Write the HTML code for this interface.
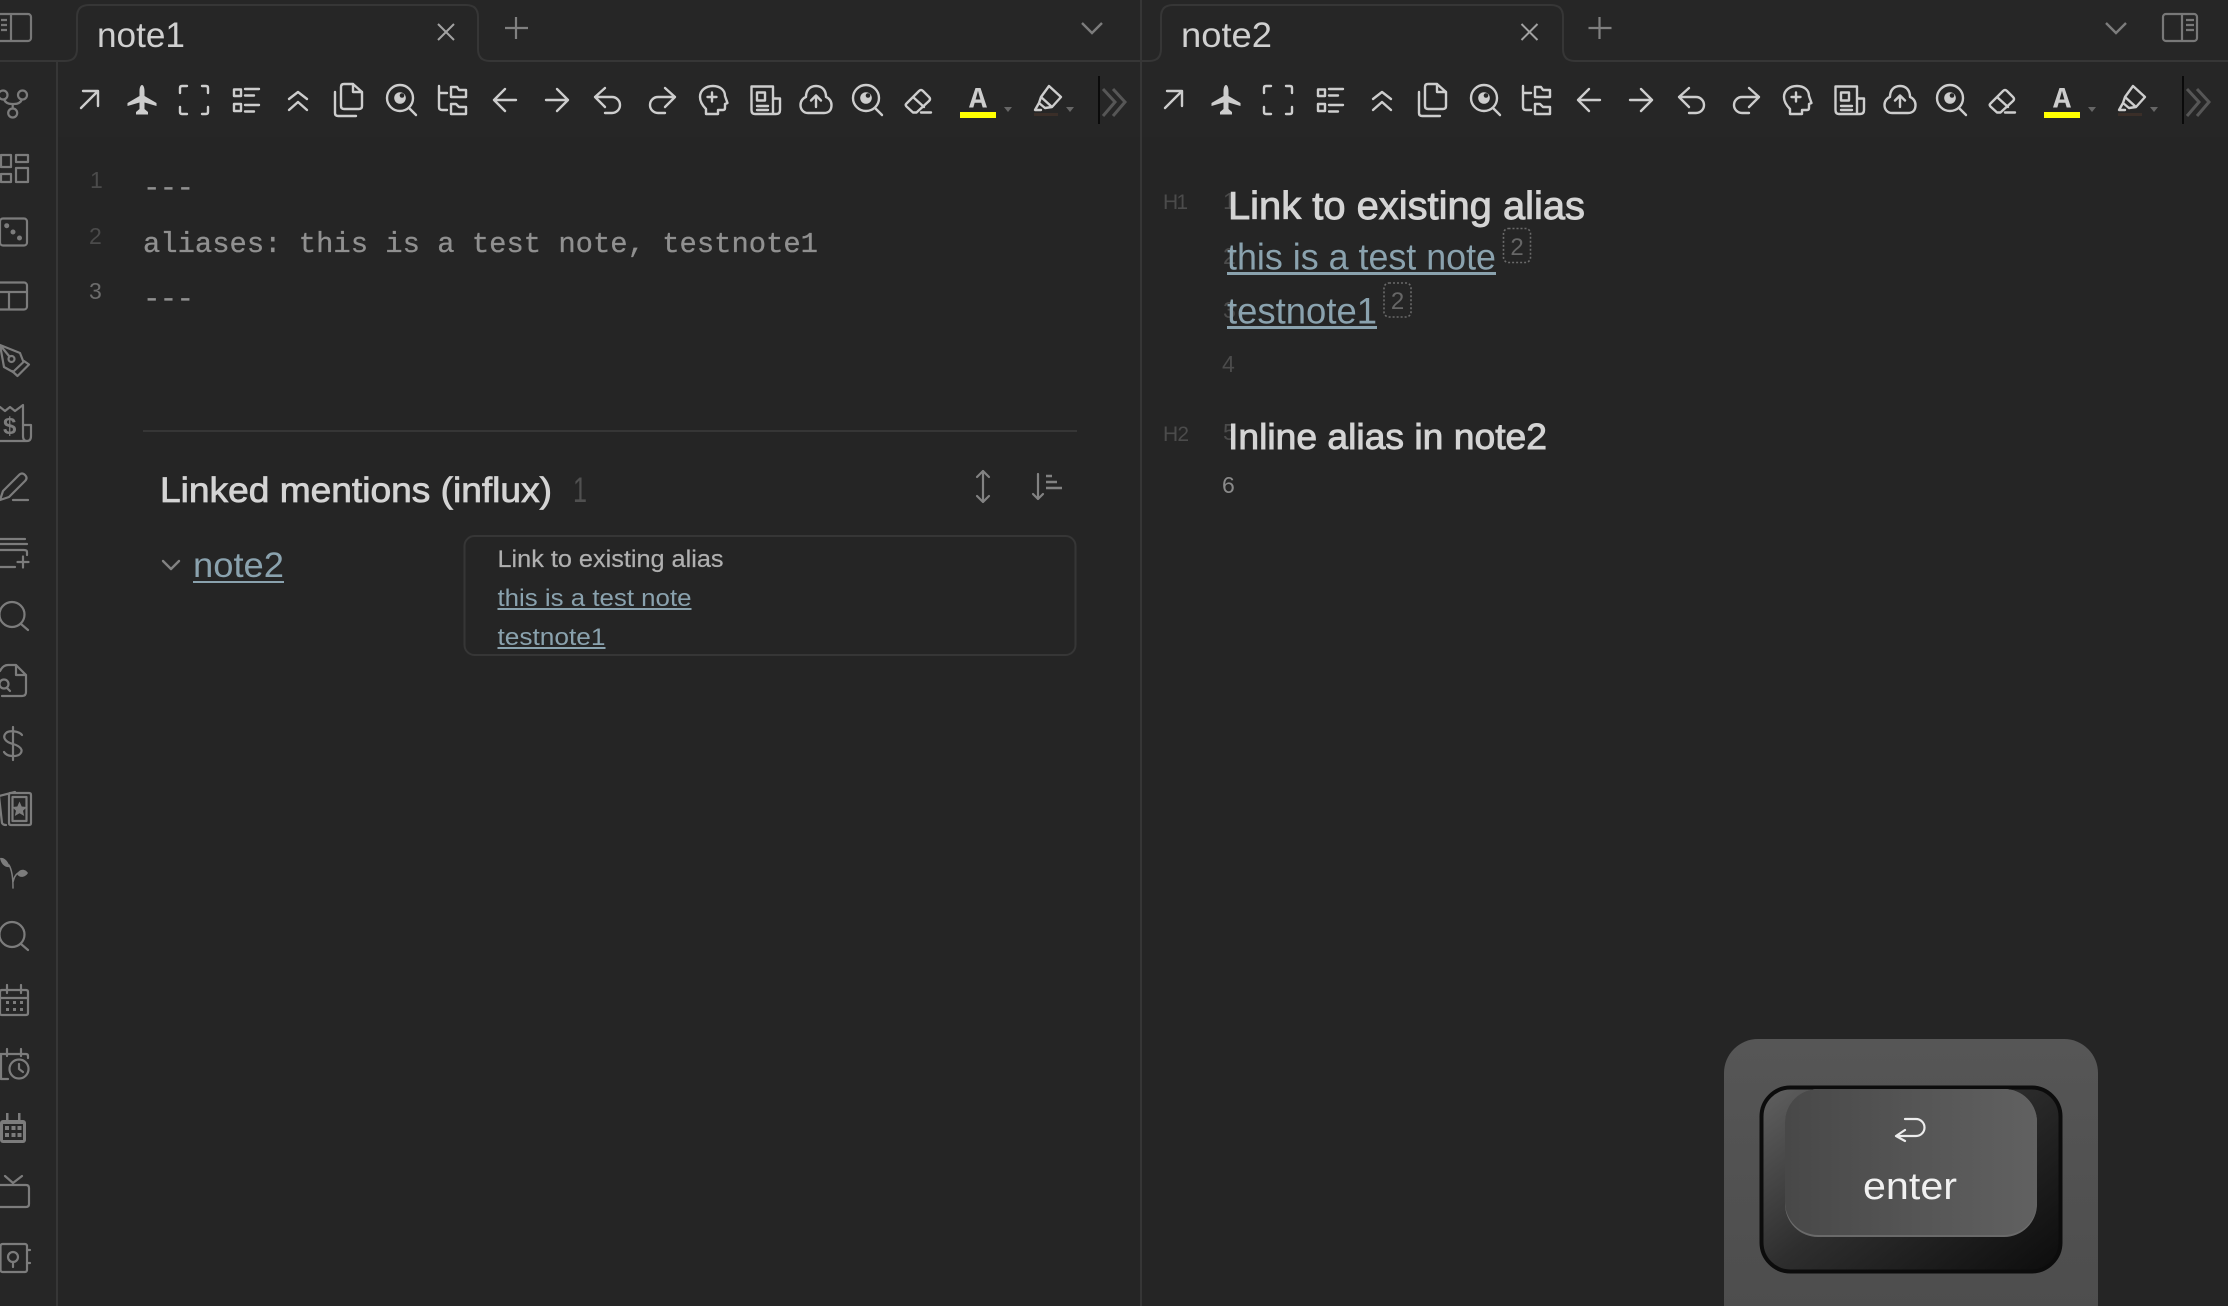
<!DOCTYPE html>
<html><head><meta charset="utf-8"><title>note1 / note2</title>
<style>
html,body{margin:0;padding:0;background:#262626;width:2228px;height:1306px;overflow:hidden}
svg{display:block;position:absolute;left:0;top:0}
text{font-family:"Liberation Sans",sans-serif}
.m{font-family:"Liberation Mono",monospace}
.t{fill:none;stroke:#cdcdcd;stroke-width:2.4;stroke-linecap:round;stroke-linejoin:round}
.f{fill:#cdcdcd}
.s{fill:none;stroke:#7c7c7c;stroke-width:2.2;stroke-linecap:round;stroke-linejoin:round}
.sf{fill:#7c7c7c}
.n{fill:#4b4b4b;font-size:23px}
.lk{fill:#8aa2ae}
.ul{fill:#8aa2ae}
</style></head><body>
<svg width="2228" height="1306" viewBox="0 0 2228 1306" xmlns="http://www.w3.org/2000/svg">
<defs>
<linearGradient id="cap" x1="0" x2="1" y1="0" y2="0"><stop offset="0" stop-color="#484848"/><stop offset="1" stop-color="#616161"/></linearGradient>
<linearGradient id="well" x1="0" x2="1" y1="0.1" y2="0.9"><stop offset="0" stop-color="#5c5c5c"/><stop offset=".45" stop-color="#2e2e2e"/><stop offset="1" stop-color="#0f0f0f"/></linearGradient>
<linearGradient id="plate" x1="0" x2="0" y1="0" y2="1"><stop offset="0" stop-color="#565656"/><stop offset="1" stop-color="#4c4c4c"/></linearGradient>
<g id="bar">
<path class="t" d="M81 108L98 91M83 91H98V106"/>
<path class="f" d="M142 85C143.500 85 144.500 88 144.500 91V96L156.500 103V106L144.500 102.500V109L148 112V114.500H136V112L139.500 109V102.500L127.500 106V103L139.500 96V91C139.500 88 140.500 85 142 85Z"/>
<path class="t" d="M180 93V88Q180 86 182 86H187M202 86H206Q208 86 208 88V93M208 107V112Q208 114 206 114H202M187 114H182Q180 114 180 112V107"/>
<path class="t" d="M234 89.500H241V96H234ZM234 104H241V111H234ZM245 89H259M245 95.500H254M245 105H259M245 111.500H254" stroke-linecap="butt"/>
<path class="t" d="M289 99L298 92L307 99M289 110L298 102L307 110"/>
<path class="t" d="M335 92V113Q335 116 338 116H356M341 87Q341 84 344 84H353L362 92V106Q362 109 359 109H344Q341 109 341 106ZM353 84V92H362"/>
<circle class="t" cx="400" cy="98" r="13"/><path class="t" d="M409 108L416 115"/><circle class="f" cx="400" cy="98" r="5.800"/><circle cx="402" cy="95.500" r="2.300" fill="#262626"/>
<path class="t" d="M439 86V107Q439 110 442 110H447M439 93H447M451 87H457L459 90H466V97H451ZM451 104H456L459 107H466V114H451Z"/>
<path class="t" d="M516 100H494M505 89L494 100L505 111"/>
<path class="t" d="M546 100H568M557 89L568 100L557 111"/>
<path class="t" d="M595 97H612A8 8 0 0 1 612 113H605M605 88L595 97L605 107"/>
<path class="t" d="M675 97H658A8 8 0 0 0 658 113H665M665 88L675 97L665 107"/>
<path class="t" d="M706 114V109C702 105 700 101 700 97C700 90 706 86 713 86C720 86 725 90 725 96L727.500 103L725 104V108Q725 110 723 110H718V114ZM712 92.500V101.500M707.500 97H716.500"/>
<path class="t" d="M751.500 86.500H773V114H755Q751.500 114 751.500 110ZM773 98.500H780V110Q780 114 776 114H773M757 92.500H765V100.500H757ZM757 106H768M757 110H768" stroke-linecap="butt"/>
<path class="t" d="M808 113C803 113 800.500 109 800.500 105C800.500 101 803 98 806 97C806 90 810 86 816 86C822 86 826 90 826 97C829 98 831.500 101 831.500 105C831.500 110 829 113 824 113ZM816 107V96M811 100.500L816 95.500L821 100.500"/>
<circle class="t" cx="866" cy="98" r="13"/><path class="t" d="M875 108L882 115"/><circle class="f" cx="866" cy="98" r="5.800"/><circle cx="868" cy="95.500" r="2.300" fill="#262626"/>
<path class="t" d="M906.500 103.500L919 91Q921 89 923 91L929 97Q931 99 929 101L916.500 112.500H913L906.500 106.500Q905 105 906.500 103.500ZM913 97L924 107M921 112.500H931"/>
<path fill="#666" d="M1004 107H1012L1008 112Z"/>
<path class="t" d="M1049 86L1061 97L1052 107L1041 97ZM1041 97L1039 103L1045 108L1052 107M1039 103L1035 110H1041"/>
<rect x="1034" y="113" width="24" height="3" fill="#3a2e28"/>
<path fill="#666" d="M1066 107H1074L1070 112Z"/>
<rect x="1098" y="76" width="2" height="48" fill="#0a0a0a"/>
<path fill="none" stroke="#565656" stroke-width="3" d="M1103 89L1115 102L1103 116M1113 89L1125 102L1113 116"/>
</g>
<g id="top">
<path fill="none" stroke="#a2a2a2" stroke-width="2" d="M438 24L454 40M454 24L438 40"/>
<path fill="none" stroke="#808080" stroke-width="2.200" d="M516 17V39M505 28H528"/>
</g>
</defs>

<rect x="57" y="137" width="2171" height="1169" fill="#252525"/>

<path fill="none" stroke="#363636" stroke-width="2" d="M0 61H65Q77 61 77 49V17Q77 5 89 5H466Q478 5 478 17V49Q478 61 490 61H1141"/>
<path fill="none" stroke="#363636" stroke-width="2" d="M1142 61H1149Q1161 61 1161 49V17Q1161 5 1173 5H1551Q1563 5 1563 17V49Q1563 61 1575 61H2228"/>
<rect x="56" y="61" width="2" height="1245" fill="#363636"/>
<rect x="1140" y="0" width="2" height="1306" fill="#363636"/>

<text x="97" y="47" font-size="35" fill="#d0d0d0" textLength="88" lengthAdjust="spacingAndGlyphs">note1</text>
<text x="1181" y="47" font-size="35" fill="#d0d0d0" textLength="91" lengthAdjust="spacingAndGlyphs">note2</text>
<use href="#top"/><use href="#top" x="1083.500"/>
<path fill="none" stroke="#7c7c7c" stroke-width="2.400" d="M1082 23L1092 33L1102 23"/>
<path fill="none" stroke="#7c7c7c" stroke-width="2.400" d="M2106 23L2116 33L2126 23"/>
<use href="#bar"/><use href="#bar" x="1084"/>

<text class="m" x="969" y="107.500" font-size="30" font-weight="700" fill="#cdcdcd" textLength="18" lengthAdjust="spacingAndGlyphs">A</text>
<rect x="960" y="112" width="36" height="6" fill="#ffff00"/>
<text class="m" x="2053" y="107.500" font-size="30" font-weight="700" fill="#cdcdcd" textLength="18" lengthAdjust="spacingAndGlyphs">A</text>
<rect x="2044" y="112" width="36" height="6" fill="#ffff00"/>

<!-- pane toggles -->
<g fill="none" stroke="#787878" stroke-width="2.200"><rect x="-6" y="14" width="37" height="27" rx="3"/><path d="M11 14V41"/><path d="M1 20H7M1 25H7M1 30H7"/></g>
<g fill="none" stroke="#787878" stroke-width="2.200"><rect x="2163" y="14" width="34" height="27" rx="3"/><path d="M2182 14V41"/><path d="M2186 20H2194M2186 25H2194M2186 30H2194"/></g>

<!-- sidebar -->
<g class="s">
<circle cx="3" cy="95" r="4.500"/><circle cx="22.500" cy="95" r="4.500"/><circle cx="12.700" cy="113" r="4.500"/><path d="M4 99.500Q6 104 12 104H14Q20 104 22 99.500M12.700 104V108.500"/>
<path d="M1 155H11V167H1ZM1 174H11V182H1ZM16 155H28V162H16ZM16 168H28V182H16Z"/>
<rect x="0" y="218.500" width="27" height="27" rx="3"/>
<rect x="-6" y="282.500" width="33" height="27" rx="3"/><path d="M-6 292H27M9 292V309"/>
<path d="M0 345L20 353L23.500 362L13 372L4 367ZM0 345L9 356"/><circle cx="11.500" cy="359" r="3"/><path d="M24 361L29 364.500L17.500 376L12 371"/>
<path d="M0 407L5 411L10 407L15 411L23 405V436Q23 441 27 441H0M23 425H31V436Q31 441 27 441"/>
<path d="M0 500L3 491L19 475Q22 472 25 475Q28 478 25 481L9 497ZM13 500H28" />
<path d="M0 539H25M0 544H27M0 550H24Q27 550 27 552V555M15 567H0M23 556.500V567.500M17.500 562H28.500"/>
<circle cx="12" cy="614.500" r="12.500"/><path d="M21 624L28 630"/>
<path d="M0 671Q3 665 8 665H16L26 675V692Q26 696 22 696H2M16 665V675H26"/><circle cx="4" cy="684" r="4.500"/><path d="M7 688L10 691"/>
<path d="M22 735C19 731 9 730 6 733C2 737 5 742 13 744C20 746 24 750 20 754C17 757 7 757 4 752M13 727V760"/>
<path d="M-1 796L15 792M-1 796L2 823Q3 825 6 825M10 793H29Q31 793 31 795V823Q31 825 29 825H11Q9 825 9 823V795Q9 793 10 793Z"/><rect x="12.500" y="797" width="14" height="24"/>
<path d="M9 865C12 870 13 878 13 888M13 882C14 878 15 875 18 873" stroke-width="1.500"/>
<circle cx="12" cy="934.500" r="12.500"/><path d="M21 944L28 950"/>
<path d="M2 990H26Q28 990 28 992V1013Q28 1015 26 1015H2Q0 1015 0 1013V992Q0 990 2 990ZM0 998H28M7 985V993M21 985V993"/>
<path d="M7 1049V1056M21 1049V1056M0 1054H26Q28 1054 28 1056V1058M8 1079H1V1054"/><circle cx="19" cy="1069" r="9.500"/><path d="M19 1064V1069L23 1072"/>
<path d="M-2 1185H26Q29 1185 29 1188V1204Q29 1207 26 1207H-2M5 1176L13 1183L22 1176"/>
<rect x="0.500" y="1244" width="26.500" height="28" rx="2"/><path d="M27 1250H30M27 1263H30M13 1262V1267"/><circle cx="13" cy="1257" r="5"/>
</g>
<g class="sf">
<circle cx="6.700" cy="225.700" r="2.500"/><circle cx="13" cy="232" r="2.500"/><circle cx="19.500" cy="238" r="2.500"/>
<path d="M0 858C4 857 8 861 10 867C5 868 1 864 0 858ZM17 874C19 869 25 868 28 873C25 878 19 878 17 874Z"/>
<path d="M19.500 801.500L21.700 806.500L27 807L23 810.800L24.200 816L19.500 813.300L14.800 816L16 810.800L12 807L17.300 806.500Z"/>
<rect x="0" y="1120" width="26" height="23" rx="3"/>
<rect x="6" y="1113" width="2.500" height="8"/><rect x="18" y="1113" width="2.500" height="8"/>
</g>
<rect x="3" y="1124" width="20" height="16" fill="#262626"/>
<g fill="#7c7c7c"><rect x="5" y="1126" width="4" height="4"/><rect x="11.500" y="1126" width="4" height="4"/><rect x="17.500" y="1126" width="4" height="4"/><rect x="5" y="1133" width="4" height="4"/><rect x="11.500" y="1133" width="4" height="4"/><rect x="17.500" y="1133" width="4" height="4"/></g>
<g fill="#7c7c7c"><rect x="6" y="1001" width="3" height="3"/><rect x="13" y="1001" width="3" height="3"/><rect x="20" y="1001" width="3" height="3"/><rect x="6" y="1008" width="3" height="3"/><rect x="13" y="1008" width="3" height="3"/><rect x="20" y="1008" width="3" height="3"/></g>
<text x="3" y="434" font-size="24" font-weight="700" fill="#7c7c7c" textLength="14">$</text>

<!-- left editor -->
<text class="n" x="90" y="188">1</text>
<text class="n" x="89" y="244">2</text>
<text x="89" y="299" font-size="23" fill="#6c6c6c">3</text>
<g class="m" font-size="29" fill="#909090">
<text class="m" x="143" y="196" textLength="51" fill="#909090" stroke="#909090" stroke-width=".3">---</text>
<text class="m" x="143" y="252" textLength="675" fill="#909090" stroke="#909090" stroke-width=".3" lengthAdjust="spacingAndGlyphs">aliases: this is a test note, testnote1</text>
<text class="m" x="143" y="307" textLength="51" fill="#909090" stroke="#909090" stroke-width=".3">---</text>
</g>

<rect x="143" y="430" width="934" height="2" fill="#363636"/>
<text x="160" y="502" font-size="35" fill="#d4d4d4" stroke="#d4d4d4" stroke-width=".8" textLength="392" lengthAdjust="spacingAndGlyphs">Linked mentions (influx)</text>
<text x="573" y="502" font-size="35" fill="#505050" textLength="14" lengthAdjust="spacingAndGlyphs">1</text>
<path fill="none" stroke="#828282" stroke-width="2.200" stroke-linecap="round" stroke-linejoin="round" d="M983 471V502M977 477L983 471L989 477M977 496L983 502L989 496"/>
<path fill="none" stroke="#828282" stroke-width="2.200" stroke-linecap="round" stroke-linejoin="round" d="M1038 474V499M1033 494L1038 499L1043 494"/>
<path fill="none" stroke="#828282" stroke-width="2.400" d="M1046 476H1052M1046 482H1057M1046 488H1062"/>
<path fill="none" stroke="#828282" stroke-width="2.400" stroke-linecap="round" stroke-linejoin="round" d="M163 561L171 569L179 561"/>
<text class="lk" x="193" y="577" font-size="35" textLength="91" lengthAdjust="spacingAndGlyphs">note2</text>
<rect class="ul" x="193" y="581" width="91" height="2"/>
<rect x="464.500" y="536" width="611" height="119" rx="10" fill="none" stroke="#363636" stroke-width="2"/>
<text x="497.500" y="567" font-size="24" fill="#b0b0b0" stroke="#b0b0b0" stroke-width=".2" textLength="226" lengthAdjust="spacingAndGlyphs">Link to existing alias</text>
<text class="lk" x="497.500" y="606" font-size="24" textLength="194" lengthAdjust="spacingAndGlyphs">this is a test note</text>
<rect class="ul" x="497.500" y="608" width="194" height="2"/>
<text class="lk" x="497.500" y="645" font-size="24" textLength="108" lengthAdjust="spacingAndGlyphs">testnote1</text>
<rect class="ul" x="497.500" y="647" width="108" height="2"/>

<!-- right editor -->
<text x="1163" y="209" font-size="21" fill="#4b4b4b" textLength="25">H1</text>
<text x="1163" y="441" font-size="21" fill="#4b4b4b" textLength="26">H2</text>
<text class="n" x="1223" y="209">1</text>
<text class="n" x="1223" y="264">2</text>
<text class="n" x="1223" y="318">3</text>
<text class="n" x="1222" y="372">4</text>
<text class="n" x="1223" y="440">5</text>
<text x="1222" y="493" font-size="23" fill="#8a8a8a">6</text>
<text x="1228" y="219" font-size="39" fill="#d4d4d4" stroke="#d4d4d4" stroke-width=".9" textLength="357" lengthAdjust="spacingAndGlyphs">Link to existing alias</text>
<text class="lk" x="1227" y="269.500" font-size="37" textLength="269" lengthAdjust="spacingAndGlyphs">this is a test note</text>
<rect class="ul" x="1227" y="272" width="269" height="3"/>
<rect x="1503.500" y="228.500" width="27" height="34" rx="5" fill="none" stroke="#6a6a6a" stroke-width="1.600" stroke-dasharray="2 2"/>
<text x="1517" y="255" font-size="24" fill="#666" text-anchor="middle">2</text>
<text class="lk" x="1227" y="323.500" font-size="37" textLength="150" lengthAdjust="spacingAndGlyphs">testnote1</text>
<rect class="ul" x="1227" y="326" width="150" height="3"/>
<rect x="1384" y="283" width="27" height="34" rx="5" fill="none" stroke="#6a6a6a" stroke-width="1.600" stroke-dasharray="2 2"/>
<text x="1397.500" y="309" font-size="24" fill="#666" text-anchor="middle">2</text>
<text x="1228" y="449" font-size="36" fill="#d4d4d4" stroke="#d4d4d4" stroke-width=".9" textLength="319" lengthAdjust="spacingAndGlyphs">Inline alias in note2</text>

<!-- enter key -->
<rect x="1724" y="1039" width="374" height="300" rx="34" fill="url(#plate)"/>
<rect x="1761.500" y="1087.500" width="299" height="184" rx="29" fill="url(#well)" stroke="#0c0c0c" stroke-width="4"/>
<rect x="1785" y="1089" width="252" height="148" rx="33" fill="#6a6a6a"/>
<rect x="1785" y="1089" width="252" height="146" rx="33" fill="url(#cap)"/>
<path fill="none" stroke="#ececec" stroke-width="2.200" stroke-linecap="round" stroke-linejoin="round" d="M1897 1136H1916A8.500 8.500 0 0 0 1916 1119H1905M1905 1130L1896 1136L1905 1141"/>
<text x="1863" y="1199" font-size="38" fill="#f0f0f0" textLength="94" lengthAdjust="spacingAndGlyphs">enter</text>
</svg>
</body></html>
